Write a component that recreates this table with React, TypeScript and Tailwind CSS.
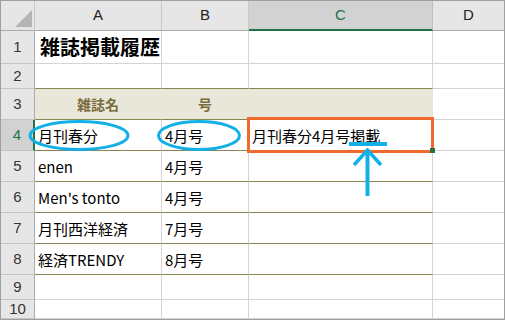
import React from "react";

const CJK = { fontFamily: '"Noto Sans CJK JP", "Noto Sans", sans-serif' };
const HDR = { fontFamily: '"Liberation Sans", Arial, sans-serif' };

const widths = ["w-[127px]", "w-[87px]", "w-[184px]"];

type Row = {
  n: number;
  h: string;
  a?: string;
  b?: string;
  c?: string;
  olive?: boolean;
  head?: boolean;
  title?: boolean;
  sel?: boolean;
};

const rows: Row[] = [
  { n: 1, h: "h-[33px]", a: "雑誌掲載履歴", title: true },
  { n: 2, h: "h-[25px]", olive: true },
  { n: 3, h: "h-[31px]", a: "雑誌名", b: "号", olive: true, head: true },
  { n: 4, h: "h-[31px]", a: "月刊春分", b: "4月号", c: "月刊春分4月号掲載", olive: true, sel: true },
  { n: 5, h: "h-[31px]", a: "enen", b: "4月号", olive: true },
  { n: 6, h: "h-[31px]", a: "Men's tonto", b: "4月号", olive: true },
  { n: 7, h: "h-[31px]", a: "月刊西洋経済", b: "7月号", olive: true },
  { n: 8, h: "h-[31px]", a: "経済TRENDY", b: "8月号", olive: true },
  { n: 9, h: "h-[25px]" },
  { n: 10, h: "h-[19px]" },
];

export default function App() {
  return (
    <div className="relative w-[505px] h-[320px] overflow-hidden bg-white border border-[#9f9f9f] box-border">
      {/* column header */}
      <div className="flex h-[30px]" style={HDR}>
        <div className="relative w-[34px] h-full bg-[#e6e6e6] border-r border-r-[#c8c8c8] border-b border-b-[#ababab]">
          <svg className="absolute left-0 top-0" width="34" height="30">
            <polygon points="31,9 31,26 14,26" fill="#b4b4b4" />
          </svg>
        </div>
        <div className="w-[127px] h-full bg-[#e6e6e6] border-r border-r-[#c8c8c8] border-b border-b-[#ababab] flex items-center justify-center text-[15px] text-[#222]">
          A
        </div>
        <div className="w-[87px] h-full bg-[#e6e6e6] border-r border-r-[#c8c8c8] border-b border-b-[#ababab] flex items-center justify-center text-[15px] text-[#222]">
          B
        </div>
        <div className="w-[184px] h-full bg-[#d2d2d2] border-r border-r-[#c0c0c0] border-b-2 border-b-[#217346] flex items-center justify-center text-[15px] text-[#217346]">
          C
        </div>
        <div className="w-[71px] h-full bg-[#e6e6e6] border-b border-b-[#ababab] flex items-center justify-center text-[15px] text-[#222]">
          D
        </div>
      </div>

      {rows.map((r) => (
        <div key={r.n} className={`flex ${r.h}`}>
          <div
            className={`w-[34px] h-full flex items-center justify-center text-[15px] border-b border-b-[#c4c4c4] ${
              r.sel
                ? "bg-[#d2d2d2] text-[#217346] border-r-2 border-r-[#217346]"
                : "bg-[#e6e6e6] text-[#333] border-r border-r-[#ababab]"
            }`}
            style={HDR}
          >
            {r.n}
          </div>
          {[r.a, r.b, r.c].map((t, i) => (
            <div
              key={i}
              className={`${widths[i]} h-full flex items-center border-r ${
                r.head ? "bg-[#e9e7da] border-r-[#e9e7da]" : "border-r-[#d4d4d4]"
              } ${i === 2 ? "border-r-[#cfcfcf]" : ""} ${
                r.olive ? "border-b border-b-[#8c8452]" : "border-b border-b-[#d4d4d4]"
              } ${r.head ? "justify-center font-bold text-[#7a6d3c] text-[14px]" : "pl-[3px] text-[15px] text-black"} ${
                r.title ? "font-bold text-[20px] pl-[5px] whitespace-nowrap overflow-visible" : ""
              }`}
              style={CJK}
            >
              <span className="leading-none whitespace-nowrap">{t}</span>
            </div>
          ))}
          <div className="w-[71px] h-full border-b border-b-[#d4d4d4]" />
        </div>
      ))}

      {/* selection box */}
      <div className="absolute left-[246px] top-[116px] w-[187px] h-[36px] border-[3px] border-[#ee6b2d] box-border" />
      <div className="absolute left-[429px] top-[147px] w-[5px] h-[5px] bg-[#217346]" />

      {/* annotations */}
      <svg className="absolute left-0 top-0 pointer-events-none" width="505" height="320">
        <ellipse cx="78" cy="134.5" rx="49" ry="14" fill="none" stroke="#13b0e8" strokeWidth="3" />
        <ellipse cx="198" cy="134.5" rx="40.5" ry="14" fill="none" stroke="#13b0e8" strokeWidth="3" />
        <rect x="348" y="141" width="38" height="4" fill="#13b0e8" />
        <line x1="366.5" y1="149" x2="366.5" y2="195" stroke="#13b0e8" strokeWidth="4" />
        <polyline points="353,164 366.5,149 380,164" fill="none" stroke="#13b0e8" strokeWidth="3.5" />
      </svg>
    </div>
  );
}
